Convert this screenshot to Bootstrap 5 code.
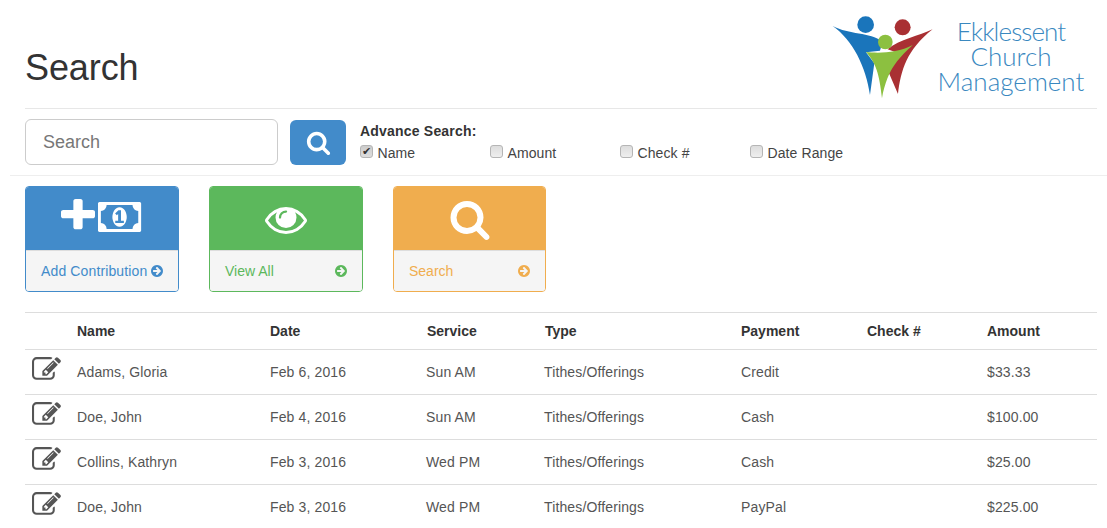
<!DOCTYPE html>
<html lang="en">
<head>
<meta charset="utf-8">
<title>Search</title>
<link href="https://cdn.jsdelivr.net/npm/bootstrap@5.3.0/dist/css/bootstrap.min.css" rel="stylesheet">
<style>
html,body{height:528px;overflow:hidden}
body{font-family:"Liberation Sans",Arial,sans-serif;font-size:14px;color:#333;background:#fff}
.page-wrap{padding:0 10px 0 25px}
.top-head{height:108px;border-bottom:1px solid #e7e7e7;margin-bottom:0;box-sizing:content-box}
.top-head h1{font-size:36px;font-weight:500;color:#333;line-height:40px;margin:0 0 20px;letter-spacing:-.1px}
.logo-block{padding:15px 12px 0 0}
.logo-fig{width:103.3px;height:85px;display:block}
.logo-words{font-family:"Lato",sans-serif;font-weight:300;font-size:26px;line-height:25px;color:#3a88bf;text-align:center;width:148px;margin:4px 0 0 3px;white-space:nowrap}
.logo-tight{letter-spacing:-.9px}
.search-bar{height:66px;padding-top:10px}
.search-field{width:253px;height:46px;border:1px solid #ccc;border-radius:6px;font-size:18px;padding:10px 17px;color:#555}
.search-field::placeholder{color:#777;opacity:1}
.search-go{width:56px;height:45px;margin:1px 14px 0 12px;background:#428bca;border:0;border-radius:6px;color:#fff;padding:0 0 0 1px}
.search-go svg{width:25px;height:25px}
.adv-title{font-weight:700;letter-spacing:.2px;line-height:20px;margin-top:2px;color:#333}
.adv-rows{margin-top:2px}
.adv-item{width:130px;line-height:20px;color:#444;margin:0;letter-spacing:.1px}
.adv-item input{appearance:none;width:13px;height:13px;margin:0 4.5px 6px 0;border:1px solid #b5b5b5;border-radius:3px;background:linear-gradient(#ddd,#eee);position:relative;vertical-align:middle}
.adv-item input:checked{background:linear-gradient(#ccc,#ddd)}
.adv-item input:checked::after{content:"\2714";position:absolute;left:1px;top:-3px;font-size:11px;line-height:16px;color:#333}
.full-rule{border-top:1px solid #eee;margin:0 -10px 10px -15px}
.tile-row{gap:30px;margin-bottom:20px}
.tile{width:154px;height:106px;border:1px solid;border-radius:4px;overflow:hidden;display:block;text-decoration:none}
.tile-top{height:63px;color:#fff}
.tile-foot{height:41px;background:#f5f5f5;border-top:1px solid #ddd;padding:0 13px 0 15px;font-size:14px;white-space:nowrap}
.tile-foot svg{width:14px;height:14px;fill:currentColor;flex:none}
.tile-blue{border-color:#428bca;color:#428bca}.tile-blue .tile-top{background:#428bca;padding-top:12px}
.tile-green{border-color:#5cb85c;color:#5cb85c}.tile-green .tile-top{background:#5cb85c}
.tile-orange{border-color:#f0ad4e;color:#f0ad4e;width:153px}.tile-orange .tile-top{background:#f0ad4e}
.tile-blue .tile-foot{justify-content:flex-start!important;gap:4px;letter-spacing:.13px}
.gift-table{table-layout:fixed;width:1072px;margin:0;color:#555;--bs-table-color:#555}
.gift-table th{font-weight:700;color:#333;height:36px;padding:7.5px 8px;border-top:1px solid #ddd;border-bottom:1px solid #ddd;vertical-align:middle}
.gift-table th:nth-child(4),.gift-table th:nth-child(5){padding-left:9px}
.gift-table td{height:45px;padding:8px;vertical-align:middle;border-bottom:1px solid #ddd;letter-spacing:.13px}
.gift-table td:nth-child(1){padding:0 0 6px 7px}
.edit-ico{width:29px;height:29px;fill:#555;display:block}
.w-a{width:44px}.w-b{width:193px}.w-c{width:156px}.w-d{width:118px}.w-e{width:197px}.w-f{width:126px}.w-g{width:120px}.w-h{width:118px}
</style>
</head>
<body>
<svg width="0" height="0" class="d-none" aria-hidden="true">
<symbol id="i-arrow" viewBox="0 0 1792 1792"><path d="M1285 896q0-27-18-45l-91-91-362-362q-18-18-45-18t-45 18l-91 91q-18 18-18 45t18 45l189 189h-502q-26 0-45 19t-19 45v128q0 26 19 45t45 19h502l-189 189q-19 19-19 45t19 45l91 91q18 18 45 18t45-18l362-362 91-91q18-18 18-45zm251 0q0 209-103 385.500t-279.500 279.500-385.500 103-385.500-103-279.500-279.500-103-385.500 103-385.500 279.500-279.500 385.500-103 385.500 103 279.500 279.500 103 385.500z"/></symbol>
<symbol id="i-search" viewBox="0 0 1792 1792"><path fill="currentColor" d="M1216 832q0-185-131.500-316.500t-316.500-131.500-316.500 131.500-131.500 316.500 131.500 316.500 316.500 131.500 316.500-131.500 131.500-316.500zm512 832q0 52-38 90t-90 38q-54 0-90-38l-343-342q-179 124-399 124-143 0-273.500-55.500t-225-150-150-225-55.500-273.500 55.500-273.500 150-225 225-150 273.500-55.500 273.500 55.500 225 150 150 225 55.500 273.500q0 220-124 399l343 343q37 37 37 90z"/></symbol>
<symbol id="i-edit" viewBox="0 0 1792 1792"><path d="M888 1184l116-116-152-152-116 116v56h96v96h56zm440-720q-16-16-33 1l-350 350q-17 17-1 33t33-1l350-350q17-17 1-33zm80 594v190q0 119-84.500 203.500t-203.500 84.500h-832q-119 0-203.500-84.500t-84.500-203.500v-832q0-119 84.500-203.500t203.500-84.500h832q63 0 117 25 15 7 18 23 3 17-9 29l-49 49q-14 14-32 8-23-6-45-6h-832q-66 0-113 47t-47 113v832q0 66 47 113t113 47h832q66 0 113-47t47-113v-126q0-13 9-22l64-64q15-15 35-7t20 29zm-96-738l288 288-672 672h-288v-288zm444 132l-92 92-288-288 92-92q28-28 68-28t68 28l152 152q28 28 28 68t-28 68z"/></symbol>
</svg>
<div class="page-wrap">
  <header class="top-head d-flex justify-content-between align-items-end">
    <h1>Search</h1>
    <div class="logo-block d-flex align-self-start align-items-start">
      <svg class="logo-fig" viewBox="35 45 310 255" role="img" aria-label="Ekklessent logo">
        <circle cx="139" cy="74" r="25" fill="#1a75bb"/>
        <circle cx="250" cy="82" r="24" fill="#a93033"/>
        <path fill="#a93033" d="M340 88C300 108 240 118 205 148L238 160 205 210 236 282C245 210 262 150 340 88Z"/>
        <path fill="#1a75bb" d="M40 78C90 105 150 95 190 125L182 152 140 157 165 190 152 285C140 200 100 120 40 78Z"/>
        <path fill="#8cc040" d="M140 156C175 160 235 160 280 135 245 170 205 200 188 295 180 220 170 190 140 156Z"/>
        <circle cx="198" cy="126" r="22" fill="#8cc040"/>
      </svg>
      <div class="logo-words"><span class="logo-tight">Ekklessent</span><br>Church<br>Management</div>
    </div>
  </header>
  <div class="search-bar d-flex align-items-start">
    <input class="search-field" type="text" placeholder="Search" aria-label="Search">
    <button class="search-go d-flex align-items-center justify-content-center" type="button" aria-label="Search"><svg><use href="#i-search"/></svg></button>
    <div>
      <div class="adv-title">Advance Search:</div>
      <div class="d-flex adv-rows">
        <label class="adv-item"><input type="checkbox" checked>Name</label>
        <label class="adv-item"><input type="checkbox">Amount</label>
        <label class="adv-item"><input type="checkbox">Check #</label>
        <label class="adv-item"><input type="checkbox">Date Range</label>
      </div>
    </div>
  </div>
  <div class="full-rule"></div>
  <div class="tile-row d-flex">
    <a class="tile tile-blue" href="#">
      <div class="tile-top d-flex align-items-start justify-content-center">
        <svg width="83" height="33" viewBox="0 0 83 33" aria-hidden="true" fill="#fff">
          <svg x="0" y="0" width="34" height="33" viewBox="192 128 1408 1536" preserveAspectRatio="none"><path d="M1600 736v192q0 40-28 68t-68 28h-416v416q0 40-28 68t-68 28h-192q-40 0-68-28t-28-68v-416h-416q-40 0-68-28t-28-68v-192q0-40 28-68t68-28h416v-416q0-40 28-68t68-28h192q40 0 68 28t28 68v416h416q40 0 68 28t28 68z"/></svg>
          <svg x="37" y="3" width="46" height="30" viewBox="0 256 2048 1280" preserveAspectRatio="none"><path d="M768 1152h384v-96h-128v-448h-114l-148 137 77 80q42-37 55-57h2v288h-128v96zm512-256q0 70-21 142t-59.500 134-101.500 101-138 39-138-39-101.500-101-59.500-134-21-142 21-142 59.500-134 101.500-101 138-39 138 39 101.500 101 59.500 134 21 142zm512 256v-512q-106 0-181-75t-75-181h-1152q0 106-75 181t-181 75v512q106 0 181 75t75 181h1152q0-106 75-181t181-75zm128-832v1152q0 26-19 45t-45 19h-1792q-26 0-45-19t-19-45v-1152q0-26 19-45t45-19h1792q26 0 45 19t19 45z"/></svg>
        </svg>
      </div>
      <div class="tile-foot d-flex align-items-center justify-content-between"><span>Add Contribution</span><svg><use href="#i-arrow"/></svg></div>
    </a>
    <a class="tile tile-green" href="#">
      <div class="tile-top d-flex align-items-center justify-content-center">
        <svg width="42" height="42" viewBox="0 0 1792 1792" aria-hidden="true" fill="#fff"><path d="M1664 960q-152-236-381-353 61 104 61 225 0 185-131.500 316.500t-316.500 131.500-316.500-131.500-131.500-316.500q0-121 61-225-229 117-381 353 133 205 333.500 326.500t434.500 121.500 434.500-121.500 333.500-326.500zm-720-384q0-20-14-34t-34-14q-125 0-214.500 89.500t-89.500 214.500q0 20 14 34t34 14 34-14 14-34q0-86 61-147t147-61q20 0 34-14t14-34zm848 384q0 34-20 69-140 230-376.500 368.500t-499.500 138.500-499.500-139-376.500-368q-20-35-20-69t20-69q140-229 376.500-368t499.500-139 499.500 139 376.500 368q20 35 20 69z"/></svg>
      </div>
      <div class="tile-foot d-flex align-items-center justify-content-between"><span>View All</span><svg><use href="#i-arrow"/></svg></div>
    </a>
    <a class="tile tile-orange" href="#">
      <div class="tile-top d-flex align-items-center justify-content-center">
        <svg width="42" height="42" aria-hidden="true"><use href="#i-search"/></svg>
      </div>
      <div class="tile-foot d-flex align-items-center justify-content-between"><span>Search</span><svg><use href="#i-arrow"/></svg></div>
    </a>
  </div>
  <table class="table gift-table">
    <colgroup><col class="w-a"><col class="w-b"><col class="w-c"><col class="w-d"><col class="w-e"><col class="w-f"><col class="w-g"><col class="w-h"></colgroup>
    <thead><tr><th></th><th>Name</th><th>Date</th><th>Service</th><th>Type</th><th>Payment</th><th>Check #</th><th>Amount</th></tr></thead>
    <tbody>
      <tr><td><svg class="edit-ico"><use href="#i-edit"/></svg></td><td>Adams, Gloria</td><td>Feb 6, 2016</td><td>Sun AM</td><td>Tithes/Offerings</td><td>Credit</td><td></td><td>$33.33</td></tr>
      <tr><td><svg class="edit-ico"><use href="#i-edit"/></svg></td><td>Doe, John</td><td>Feb 4, 2016</td><td>Sun AM</td><td>Tithes/Offerings</td><td>Cash</td><td></td><td>$100.00</td></tr>
      <tr><td><svg class="edit-ico"><use href="#i-edit"/></svg></td><td>Collins, Kathryn</td><td>Feb 3, 2016</td><td>Wed PM</td><td>Tithes/Offerings</td><td>Cash</td><td></td><td>$25.00</td></tr>
      <tr><td><svg class="edit-ico"><use href="#i-edit"/></svg></td><td>Doe, John</td><td>Feb 3, 2016</td><td>Wed PM</td><td>Tithes/Offerings</td><td>PayPal</td><td></td><td>$225.00</td></tr>
    </tbody>
  </table>
</div>
<script src="https://cdn.jsdelivr.net/npm/bootstrap@5.3.0/dist/js/bootstrap.bundle.min.js"></script>
</body>
</html>
